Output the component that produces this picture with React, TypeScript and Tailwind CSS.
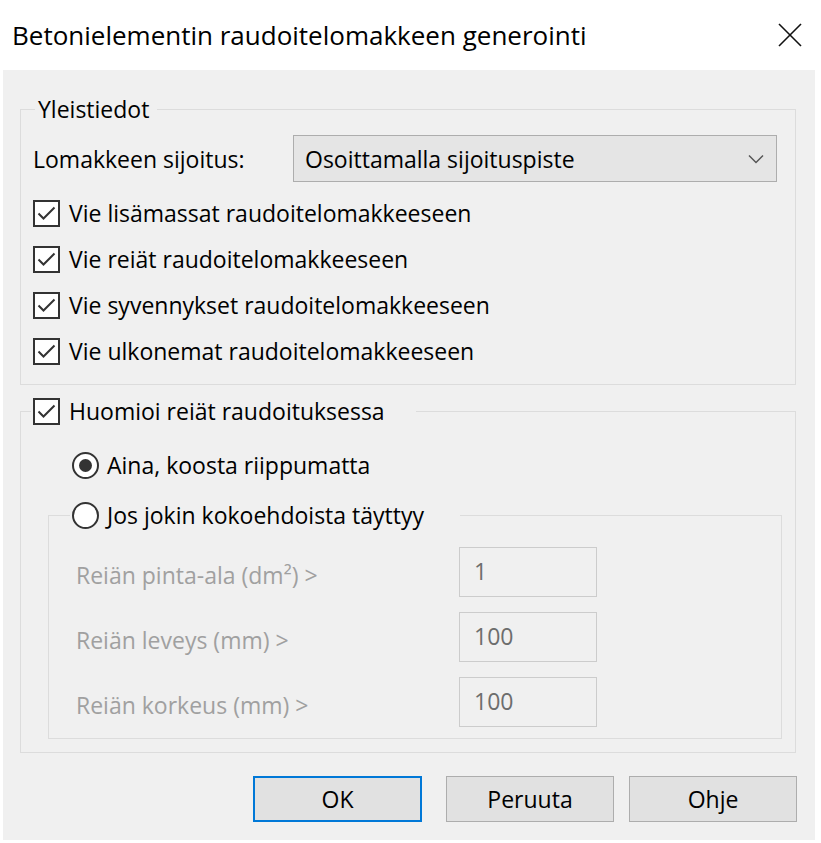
import React from "react";

function CheckBox({ checked }: { checked: boolean }) {
  return (
    <span className="flex h-[27px] w-[27px] shrink-0 items-center justify-center border-2 border-[#333333] bg-white">
      {checked && (
        <svg width="23" height="23" viewBox="0 0 23 23" fill="none">
          <polyline points="3.5,11.5 8.5,16.5 19.5,5.5" stroke="#333333" strokeWidth="2" />
        </svg>
      )}
    </span>
  );
}

function Radio({ checked }: { checked: boolean }) {
  return (
    <span className="flex h-[27px] w-[27px] shrink-0 items-center justify-center rounded-full border-2 border-[#333333] bg-white">
      {checked && <span className="h-[13px] w-[13px] rounded-full bg-[#333333]" />}
    </span>
  );
}

const checkRows = [
  "Vie lisämassat raudoitelomakkeeseen",
  "Vie reiät raudoitelomakkeeseen",
  "Vie syvennykset raudoitelomakkeeseen",
  "Vie ulkonemat raudoitelomakkeeseen",
];

const sizeRows = [
  { label: "Reiän pinta-ala (dm²) >", value: "1" },
  { label: "Reiän leveys (mm) >", value: "100" },
  { label: "Reiän korkeus (mm) >", value: "100" },
];

export default function App() {
  return (
    <div className="h-[843px] w-[821px] bg-white font-['Open_Sans',sans-serif] text-[23px] leading-[30px] text-black">
      {/* Title bar */}
      <div className="flex h-[70px] items-center justify-between pl-[12px] pr-[19px]">
        <span className="text-[26px]">Betonielementin raudoitelomakkeen generointi</span>
        <svg width="24" height="24" viewBox="0 0 24 24" fill="none">
          <line x1="1" y1="1" x2="23" y2="23" stroke="#111111" strokeWidth="1.6" />
          <line x1="23" y1="1" x2="1" y2="23" stroke="#111111" strokeWidth="1.6" />
        </svg>
      </div>

      {/* Body */}
      <div className="ml-[3px] h-[770px] w-[812px] bg-[#f0f0f0] pt-[24px]">
        {/* Yleistiedot */}
        <fieldset className="ml-[17px] mr-[19px] border border-[#dcdcdc] pb-[10px] pt-[11px]">
          <legend className="ml-[14px] pl-[3px] pr-[8px]">Yleistiedot</legend>
          <div className="pl-[12px] pr-[18px]">
            <div className="flex h-[47px] items-center">
              <span className="w-[260px]">Lomakkeen sijoitus:</span>
              <div className="flex h-[47px] w-[484px] items-center justify-between border border-[#adadad] bg-[#e5e5e5] pl-[11px] pr-[12px]">
                <span>Osoittamalla sijoituspiste</span>
                <svg width="16" height="10" viewBox="0 0 16 10" fill="none">
                  <polyline points="1,1.5 8,8.5 15,1.5" stroke="#555555" strokeWidth="1.5" />
                </svg>
              </div>
            </div>
            <div className="mt-[8px] flex flex-col">
              {checkRows.map((t) => (
                <label key={t} className="flex h-[46px] items-center gap-[9px]">
                  <CheckBox checked />
                  <span>{t}</span>
                </label>
              ))}
            </div>
          </div>
        </fieldset>

        {/* Huomioi reiät */}
        <fieldset className="ml-[17px] mr-[19px] mt-[11px] border border-[#dcdcdc] pb-[13px] pt-[16px]">
          <legend className="ml-[10px] flex h-[30px] items-center gap-[9px] pl-[2px] pr-[31px]">
            <CheckBox checked />
            <span>Huomioi reiät raudoituksessa</span>
          </legend>
          <div className="pl-[27px] pr-[13px]">
            <label className="ml-[24px] flex h-[46px] items-center gap-[8px]">
              <Radio checked />
              <span>Aina, koosta riippumatta</span>
            </label>

            <fieldset className="mt-[12px] border border-[#dcdcdc] pb-[11px] pt-[17px]">
              <legend className="ml-[21px] flex h-[30px] items-center gap-[8px] pl-[2px] pr-[36px]">
                <Radio checked={false} />
                <span>Jos jokin kokoehdoista täyttyy</span>
              </legend>
              <div className="grid grid-cols-[383px_138px] gap-y-[15px] pl-[27px]">
                {sizeRows.map((r) => (
                  <React.Fragment key={r.label}>
                    <span className="flex h-[50px] items-center pt-[6px] text-[#a0a0a0]">{r.label}</span>
                    <div className="flex h-[50px] items-center border border-[#cccccc] bg-[#f0f0f0] pb-[2px] pl-[14px] text-[#6d6d6d]">
                      {r.value}
                    </div>
                  </React.Fragment>
                ))}
              </div>
            </fieldset>
          </div>
        </fieldset>

        {/* Buttons */}
        <div className="mr-[18px] mt-[23px] flex justify-end">
          <button className="h-[46px] w-[169px] border-2 border-[#0078d7] bg-[#e1e1e1]">OK</button>
          <button className="ml-[24px] h-[46px] w-[168px] border border-[#adadad] bg-[#e1e1e1]">Peruuta</button>
          <button className="ml-[15px] h-[46px] w-[168px] border border-[#adadad] bg-[#e1e1e1]">Ohje</button>
        </div>
      </div>
    </div>
  );
}
